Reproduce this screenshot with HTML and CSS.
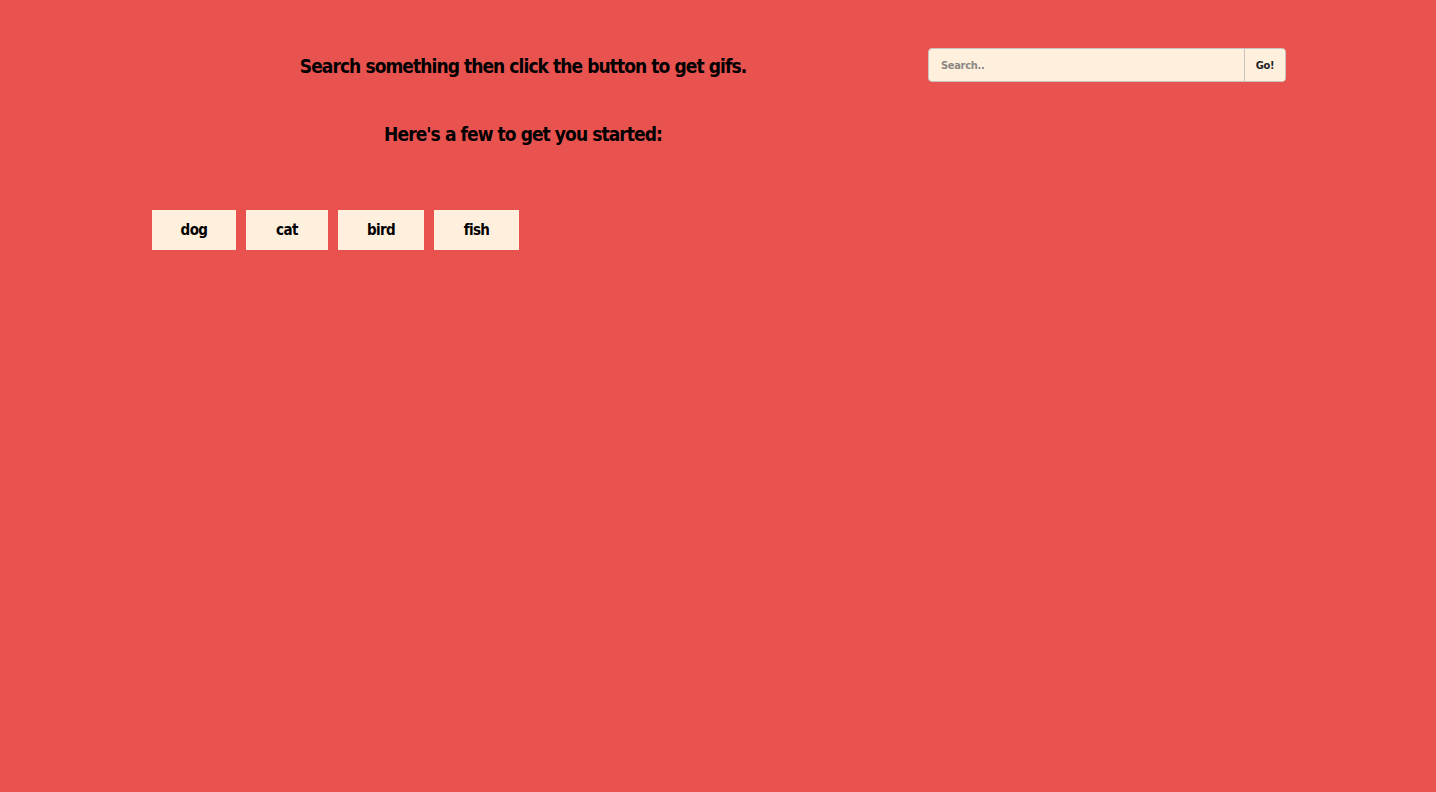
FILE: index.html
```html
<!DOCTYPE html>
<html>
<head>
<meta charset="utf-8">
<link rel="stylesheet" href="styles.css">
</head>
<body>
<div class="container">
  <div class="row">
    <div class="col-main">
      <h3 class="title">Search something then click the button to get gifs.</h3>
      <h3 class="subtitle">Here's a few to get you started:</h3>
    </div>
    <div class="col-side">
      <div class="search">
        <input class="search-input" type="text" placeholder="Search..">
        <button class="go">Go!</button>
      </div>
    </div>
  </div>
  <div class="buttons">
    <button class="tag">dog</button>
    <button class="tag">cat</button>
    <button class="tag">bird</button>
    <button class="tag">fish</button>
  </div>
</div>
</body>
</html>
```
FILE: styles.css
```css
html, body {
  margin: 0;
  padding: 0;
  height: 100%;
}
body {
  background: #e8524f;
  font-family: "DejaVu Sans Condensed", "DejaVu Sans", sans-serif;
  font-stretch: condensed;
  font-weight: bold;
  color: #000;
}
.container {
  width: 1170px;
  margin: 0 auto;
}
.row {
  display: flex;
}
.col-main {
  width: 780px;
  padding: 0 15px;
  box-sizing: border-box;
  text-align: center;
}
.col-side {
  width: 390px;
  padding: 48px 17px 0 15px;
  box-sizing: border-box;
}
.title, .subtitle {
  font-size: 19px;
  line-height: 28px;
  margin: 0;
  letter-spacing: -0.93px;
}
.title {
  padding-top: 52px;
}
.subtitle {
  padding-top: 40px;
}
.search {
  display: flex;
  height: 34px;
  border: 1px solid #c9c3bd;
  border-radius: 4px;
  background: #fff0dd;
  box-sizing: border-box;
  overflow: hidden;
}
.search-input {
  flex: 1;
  border: none;
  background: transparent;
  padding: 0 12px;
  font-family: inherit;
  font-stretch: condensed;
  font-weight: bold;
  font-size: 11px;
  letter-spacing: -0.3px;
  outline: none;
}
.search-input::placeholder {
  color: #8a8784;
}
.go {
  width: 41px;
  border: none;
  border-left: 1px solid #c9c3bd;
  background: #fff0dd;
  font-family: inherit;
  font-stretch: condensed;
  font-weight: bold;
  font-size: 11px;
  letter-spacing: -0.3px;
  color: #222;
  padding: 0;
}
.buttons {
  display: flex;
  gap: 10px;
  padding: 62px 0 0 19px;
}
.tag {
  height: 40px;
  border: none;
  background: #fff0dd;
  font-family: inherit;
  font-stretch: condensed;
  font-weight: bold;
  font-size: 15px;
  letter-spacing: -0.6px;
  color: #000;
  padding: 0;
}
.tag:nth-child(1) { width: 84px; }
.tag:nth-child(2) { width: 82px; }
.tag:nth-child(3) { width: 86px; }
.tag:nth-child(4) { width: 85px; }
```
